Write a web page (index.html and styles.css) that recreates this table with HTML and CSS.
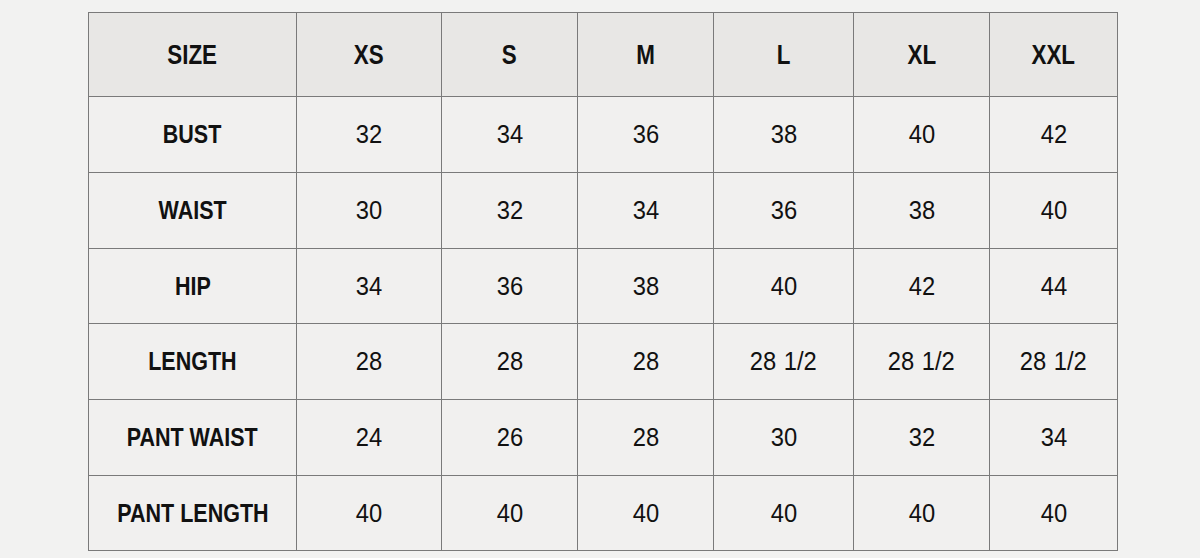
FILE: index.html
```html
<!DOCTYPE html>
<html>
<head>
<meta charset="utf-8">
<link rel="stylesheet" href="styles.css">
</head>
<body>
<div class="page">
<table class="chart">
<colgroup>
<col class="c0"><col class="c1"><col class="c2"><col class="c3"><col class="c4"><col class="c5"><col class="c6">
</colgroup>
<thead>
<tr class="head"><th><span>SIZE</span></th><th><span>XS</span></th><th><span>S</span></th><th><span>M</span></th><th><span>L</span></th><th><span>XL</span></th><th><span>XXL</span></th></tr>
</thead>
<tbody>
<tr><th><span>BUST</span></th><td><span>32</span></td><td><span>34</span></td><td><span>36</span></td><td><span>38</span></td><td><span>40</span></td><td><span>42</span></td></tr>
<tr><th><span>WAIST</span></th><td><span>30</span></td><td><span>32</span></td><td><span>34</span></td><td><span>36</span></td><td><span>38</span></td><td><span>40</span></td></tr>
<tr class="short"><th><span>HIP</span></th><td><span>34</span></td><td><span>36</span></td><td><span>38</span></td><td><span>40</span></td><td><span>42</span></td><td><span>44</span></td></tr>
<tr><th><span>LENGTH</span></th><td><span>28</span></td><td><span>28</span></td><td><span>28</span></td><td><span>28 1/2</span></td><td><span>28 1/2</span></td><td><span>28 1/2</span></td></tr>
<tr><th><span>PANT WAIST</span></th><td><span>24</span></td><td><span>26</span></td><td><span>28</span></td><td><span>30</span></td><td><span>32</span></td><td><span>34</span></td></tr>
<tr class="short"><th><span>PANT LENGTH</span></th><td><span>40</span></td><td><span>40</span></td><td><span>40</span></td><td><span>40</span></td><td><span>40</span></td><td><span>40</span></td></tr>
</tbody>
</table>
</div>
</body>
</html>
```
FILE: styles.css
```css
html, body {
  margin: 0;
  padding: 0;
  background: #f2f2f1;
}
.page {
  padding: 12px 0 0 88px;
}
.chart {
  border-collapse: collapse;
  table-layout: fixed;
  width: 1030px;
  font-family: "Liberation Sans", Arial, sans-serif;
  color: #111111;
}
.c0 { width: 208px; }
.c1 { width: 145px; }
.c2 { width: 136px; }
.c3 { width: 136px; }
.c4 { width: 140px; }
.c5 { width: 136px; }
.c6 { width: 128px; }
.chart th, .chart td {
  border: 1px solid #7a7a7a;
  text-align: center;
  padding: 0;
  height: 75px;
  background: #f1f0ef;
  line-height: 1;
}
.chart span {
  display: inline-block;
  white-space: nowrap;
  transform: scaleX(0.86);
}
.chart th {
  font-weight: 700;
  font-size: 25px;
}
.chart td {
  font-weight: 400;
  font-size: 25px;
  word-spacing: 1px;
}
.chart td span {
  transform: scaleX(0.95);
}
.chart .short th, .chart .short td {
  height: 74px;
}
.head th {
  height: 83px;
  background: #e8e7e5;
  font-size: 28px;
}
.head th span {
  transform: scaleX(0.8);
}
```
